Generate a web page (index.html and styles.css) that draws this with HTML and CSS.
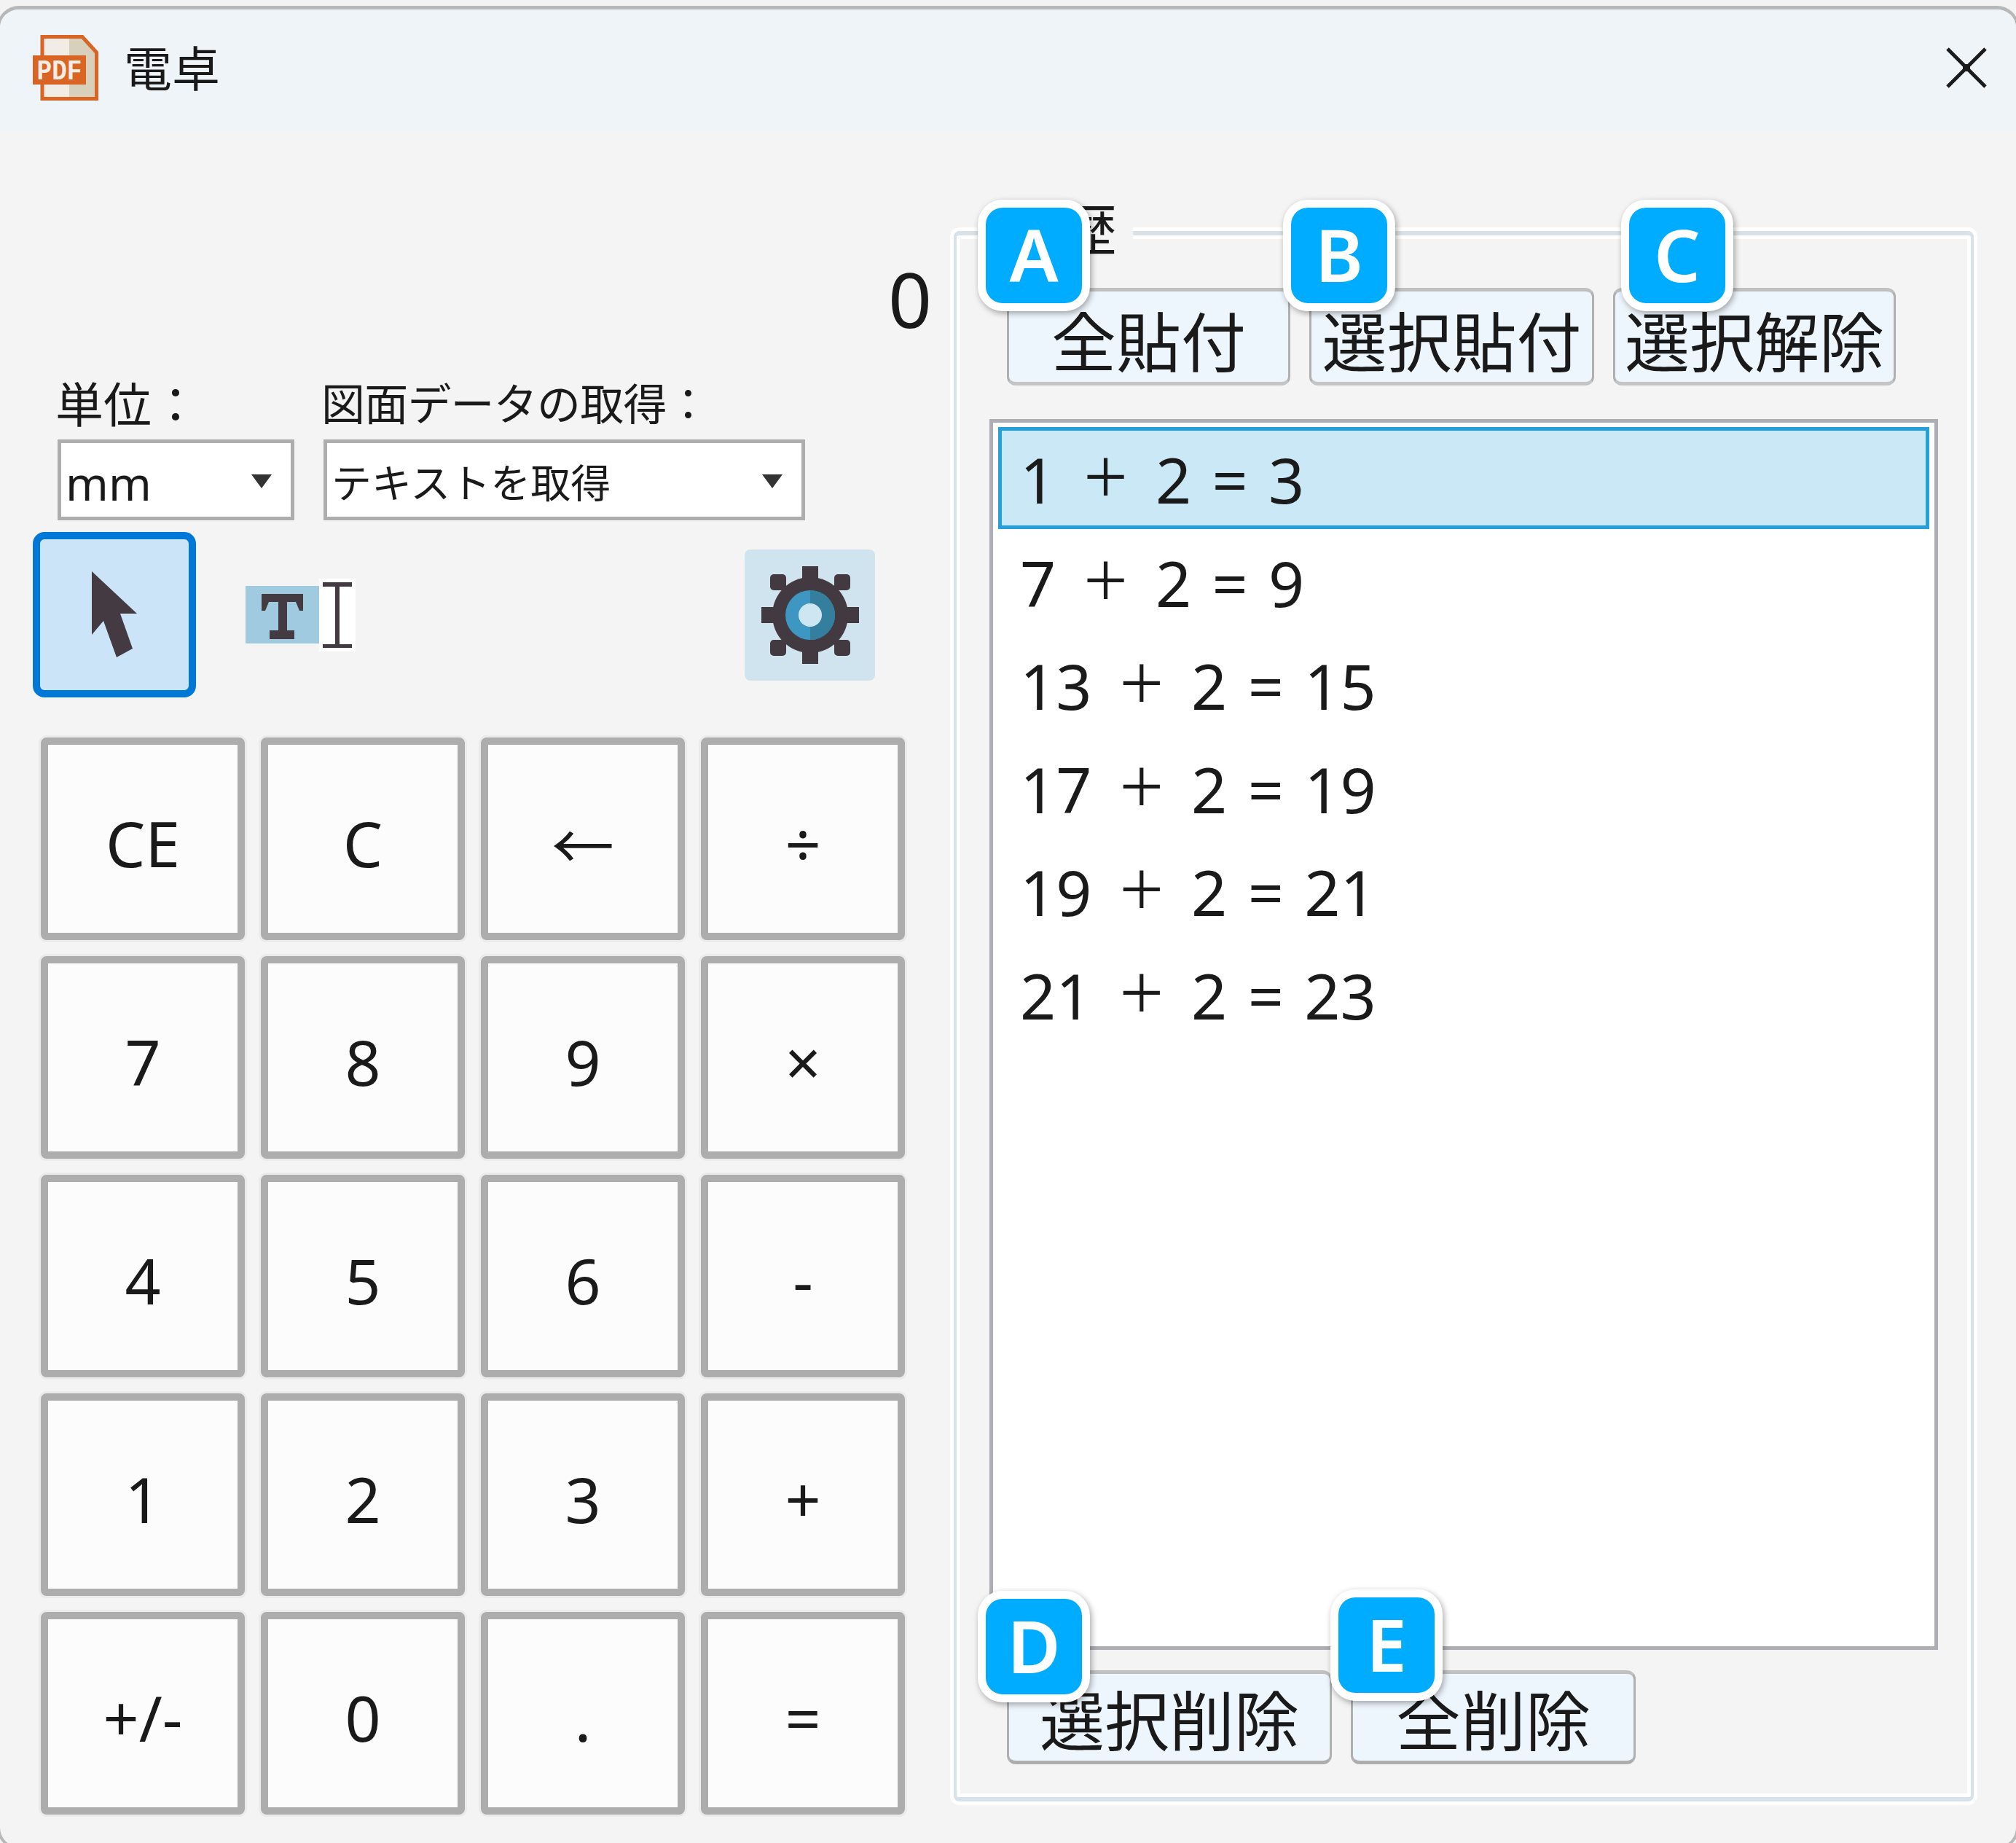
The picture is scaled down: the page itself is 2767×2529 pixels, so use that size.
FILE: index.html
```html
<!DOCTYPE html>
<html lang="ja">
<head>
<meta charset="utf-8">
<title>電卓</title>
<link rel="stylesheet" href="styles.css">
</head>
<body>
<div class="window">
  <span class="tick tick-a"></span>
  <span class="tick tick-b"></span>
  <header class="titlebar">
    <svg class="app-icon" viewBox="0 0 90 90" aria-hidden="true">
      <path d="M13 2.500H68L87.500 24V87.500H13Z" fill="#f1ece6"/>
      <path d="M50 2.500H68L87.500 24V87.500H50Z" fill="#d9d0bb"/>
      <path d="M13 2.500H68L87.500 24V87.500H13Z" fill="none" stroke="#d96424" stroke-width="5"/>
      <rect x="0" y="28" width="73" height="40" fill="#d96424"/>
      <text x="36.500" y="61" class="app-icon-text" textLength="62" lengthAdjust="spacingAndGlyphs">PDF</text>
    </svg>
    <span class="title">電卓</span>
    <svg class="close" viewBox="0 0 58 58" aria-hidden="true">
      <path d="M3 3L55 55M55 3L3 55" stroke="#1b1b1b" stroke-width="5" fill="none"/>
      <rect x="24" y="24" width="10" height="10" fill="#1b1b1b"/>
    </svg>
  </header>
  <main class="main">
    <section class="calc">
      <div class="display">0</div>
      <div class="selectors">
        <div class="field field-unit">
          <label class="field-label">単位：</label>
          <div class="select select-unit"><span class="select-value">mm</span><i class="caret"></i></div>
        </div>
        <div class="field field-get">
          <label class="field-label">図面データの取得：</label>
          <div class="select select-get"><span>テキストを取得</span><i class="caret"></i></div>
        </div>
      </div>
      <div class="tools">
        <button class="tool-pointer" aria-label="pointer">
          <svg class="pointer-icon" viewBox="125 785 70 125" aria-hidden="true">
            <path d="M129 788L191 846H168L185 894L163 906L145 856L129 875Z" fill="#443b42"/>
          </svg>
        </button>
        <div class="tool-text">
          <svg class="t-icon" viewBox="337 805 101 79" aria-hidden="true">
            <path d="M359 816H416V839H411L406 827H394V866H404V878H370V866H382V827H369L364 839H359Z" fill="#443b42"/>
          </svg>
          <svg class="beam-icon" viewBox="438 794 50 100" aria-hidden="true">
            <path d="M443 799H483V805H466V884H483V889H443V884H460V805H443Z" fill="#443b42"/>
          </svg>
        </div>
        <div class="tool-gear">
          <svg class="gear-icon" viewBox="0 0 134 134" aria-hidden="true">
            <rect x="56" y="0" width="22" height="134" fill="#433a41"/>
            <rect x="0" y="56" width="134" height="22" fill="#433a41"/>
            <circle cx="67" cy="67" r="52" fill="#433a41"/>
            <rect x="12" y="11" width="22" height="22" rx="5" fill="#433a41"/>
            <rect x="100" y="11" width="22" height="22" rx="5" fill="#433a41"/>
            <rect x="12" y="101" width="22" height="22" rx="5" fill="#433a41"/>
            <rect x="100" y="101" width="22" height="22" rx="5" fill="#433a41"/>
            <circle cx="67" cy="67" r="34" fill="#3d97c2"/>
            <path d="M67 33A34 34 0 0 1 67 101Z" fill="#337f9d"/>
            <circle cx="67" cy="67" r="16" fill="#cde6f2"/>
          </svg>
        </div>
      </div>
      <div class="keypad">
        <button class="key">CE</button><button class="key">C</button><button class="key">←</button><button class="key">÷</button>
        <button class="key">7</button><button class="key">8</button><button class="key">9</button><button class="key">×</button>
        <button class="key">4</button><button class="key">5</button><button class="key">6</button><button class="key">-</button>
        <button class="key">1</button><button class="key">2</button><button class="key">3</button><button class="key">+</button>
        <button class="key">+/-</button><button class="key">0</button><button class="key">.</button><button class="key">=</button>
      </div>
    </section>
    <section class="group">
      <div class="legend">履歴</div>
      <div class="actions">
        <button class="action w-all">全貼付</button>
        <button class="action w-sel">選択貼付</button>
        <button class="action w-clr">選択解除</button>
      </div>
      <ul class="list">
        <li class="item selected">1 <span class="op">+</span> 2 = 3</li>
        <li class="item">7 <span class="op">+</span> 2 = 9</li>
        <li class="item">13 <span class="op">+</span> 2 = 15</li>
        <li class="item">17 <span class="op">+</span> 2 = 19</li>
        <li class="item">19 <span class="op">+</span> 2 = 21</li>
        <li class="item">21 <span class="op">+</span> 2 = 23</li>
      </ul>
      <div class="actions actions-bottom">
        <button class="action w-del">選択削除</button>
        <button class="action w-sel">全削除</button>
      </div>
      <span class="badge badge-a">A</span>
      <span class="badge badge-b">B</span>
      <span class="badge badge-c">C</span>
      <span class="badge badge-d">D</span>
      <span class="badge badge-e">E</span>
    </section>
  </main>
</div>
</body>
</html>
```
FILE: styles.css
```css
* { box-sizing: border-box; }
html, body { margin: 0; padding: 0; }
body {
  width: 2767px;
  height: 2529px;
  overflow: hidden;
  background: #f3f3f3;
  font-family: "Noto Sans", "Noto Sans CJK JP", sans-serif;
  color: #1a1a1a;
}
button { font: inherit; color: inherit; padding: 0; margin: 0; }
.window {
  position: relative;
  margin: 8px -4px 0;
  width: 2775px;
  height: 2530px;
  background: #f4f4f4;
  border: 5px solid #b8b8b8;
  border-width: 5px 4px 4px;
  border-radius: 30px;
  overflow: hidden;
}
.tick { position: absolute; top: -5px; height: 5px; z-index: 2; }
.tick-a { left: 1068px; width: 39px; background: linear-gradient(90deg, #b58550 0 15%, #333 15% 50%, #5a86b0 50% 60%, #a89880 60% 70%, #665555 70% 85%, #6a92bb 85%); }
.tick-b { left: 1523px; width: 23px; background: linear-gradient(90deg, #8a6a55 0 25%, #333a45 25% 80%, #5a86b0 80%); }

.titlebar {
  display: flex;
  align-items: center;
  height: 168px;
  padding: 0 39px 0 45px;
  background: #eff4f9;
}
.app-icon { width: 90px; height: 90px; flex: none; margin-top: -8px; }
.app-icon-text { font-family: "Liberation Mono", monospace; font-weight: 700; font-size: 38px; fill: #f5ede6; text-anchor: middle; }
.title { margin-left: 35px; font-size: 66px; line-height: 1; margin-top: -8px; }
.close { width: 58px; height: 58px; margin-left: auto; margin-top: -8px; }

.main { display: flex; align-items: flex-start; }
.calc { width: 1309px; flex: none; padding-top: 164px; }
.display {
  font-size: 105px;
  line-height: 130px;
  height: 130px;
  text-align: right;
  padding-right: 30px;
}
.selectors { display: flex; gap: 40px; padding-left: 79px; margin-top: 43px; }
.field { display: flex; flex-direction: column; }
.field-label { font-size: 60px; line-height: 72px; margin-left: -3px; height: 85px; white-space: nowrap; }
.field-unit .field-label { font-size: 66px; }
.field-get .field-label { letter-spacing: -0.800px; }
.select {
  display: flex;
  align-items: center;
  height: 111px;
  background: #fff;
  border: 5px solid #adadad;
  padding: 0 26px 0 6px;
  font-size: 55px;
  white-space: nowrap;
}
.select-unit { width: 325px; }
.select-get { width: 661px; }
.select-value { font-size: 63px; margin-top: 8px; }
.caret {
  margin-left: auto;
  margin-top: 4px;
  width: 0; height: 0;
  border-left: 14px solid transparent;
  border-right: 14px solid transparent;
  border-top: 19px solid #333;
}
.tools { display: flex; align-items: center; padding-left: 45px; margin-top: 16px; }
.tool-pointer {
  display: flex;
  align-items: center;
  justify-content: center;
  width: 224px;
  height: 227px;
  background: #cce4f7;
  border: 10px solid #0078d7;
  border-radius: 16px;
}
.pointer-icon { width: 70px; height: 125px; }
.tool-text { display: flex; align-items: center; margin-left: 68px; }
.t-icon { width: 101px; height: 79px; background: #9fcadf; }
.beam-icon { width: 50px; height: 100px; background: #fff; }
.tool-gear {
  display: flex;
  align-items: center;
  justify-content: center;
  width: 179px;
  height: 180px;
  margin-left: 534px;
  background: #cfe4ef;
  border-radius: 8px;
}
.gear-icon { width: 134px; height: 134px; }
.keypad {
  display: grid;
  grid-template-columns: repeat(4, 280px);
  grid-auto-rows: 278px;
  column-gap: 22px;
  row-gap: 22px;
  padding-left: 56px;
  margin-top: 55px;
}
.key {
  display: flex;
  align-items: center;
  justify-content: center;
  padding-top: 10px;
  background: #fcfcfc;
  border: 10px solid #adadad;
  border-radius: 8px;
  box-shadow: 0 0 0 3px #ebebeb;
  font-size: 86px;
}

.group {
  position: relative;
  width: 1400px;
  height: 2155px;
  margin-top: 136px;
  padding: 72px 0 0 45px;
  border: solid #d9e2e9;
  border-width: 6px 4px;
  border-radius: 8px;
  box-shadow: 0 0 0 5px #fff, inset 0 0 0 5px #fff;
}
.legend {
  position: absolute;
  left: 68px;
  top: -48px;
  padding-right: 22px;
  height: 80px;
  background: #f4f4f4;
  font-size: 76px;
  line-height: 80px;
}
.actions { display: flex; gap: 26px; margin-left: 24px; }
.action {
  height: 134px;
  padding-top: 13px;
  background: #eef6fd;
  border: 3px solid #b0b0b0;
  border-top-width: 5px;
  border-bottom-width: 5px;
  border-top-color: #c0c0c0;
  border-bottom-color: #c4c4c4;
  border-radius: 12px;
  font-size: 89px;
  line-height: 1;
  white-space: nowrap;
}
.w-all { width: 389px; }
.w-sel { width: 391px; }
.w-clr { width: 388px; }
.w-del { width: 446px; }
.actions-bottom { margin-top: 28px; }
.actions-bottom .action { height: 129px; padding-top: 8px; border-bottom-color: #adadad; }
.list {
  list-style: none;
  width: 1302px;
  height: 1689px;
  margin: 46px 0 0;
  padding: 6px 7px;
  background: #fff;
  border: 5px solid #adadb3;
}
.item {
  height: 141.500px;
  padding-left: 25px;
  border: 5px solid transparent;
  font-size: 86px;
  line-height: 134px;
  word-spacing: 6px;
  white-space: pre;
}
.item.selected { background: #cbe8f6; border-color: #26a0da; height: 140px; margin-bottom: 1.500px; }
.op {
  display: inline-block;
  width: 80px;
  text-align: center;
  font-size: 108px;
  font-weight: 300;
  line-height: 1;
  vertical-align: -2px;
}
.badge {
  position: absolute;
  display: flex;
  align-items: center;
  justify-content: center;
  width: 154px;
  height: 153px;
  padding-bottom: 6px;
  background: #00acff;
  border: 11px solid #fff;
  border-radius: 34px;
  box-shadow: 2px 3px 8px rgba(0, 0, 0, .35);
  color: #fff;
  font-size: 100px;
  font-weight: 600;
  line-height: 1;
}
.badge-a { left: 29px; top: -49px; }
.badge-b { left: 448px; top: -49px; }
.badge-c { left: 912px; top: -49px; }
.badge-d { left: 29px; top: 1860px; }
.badge-e { left: 513px; top: 1858px; }
```
